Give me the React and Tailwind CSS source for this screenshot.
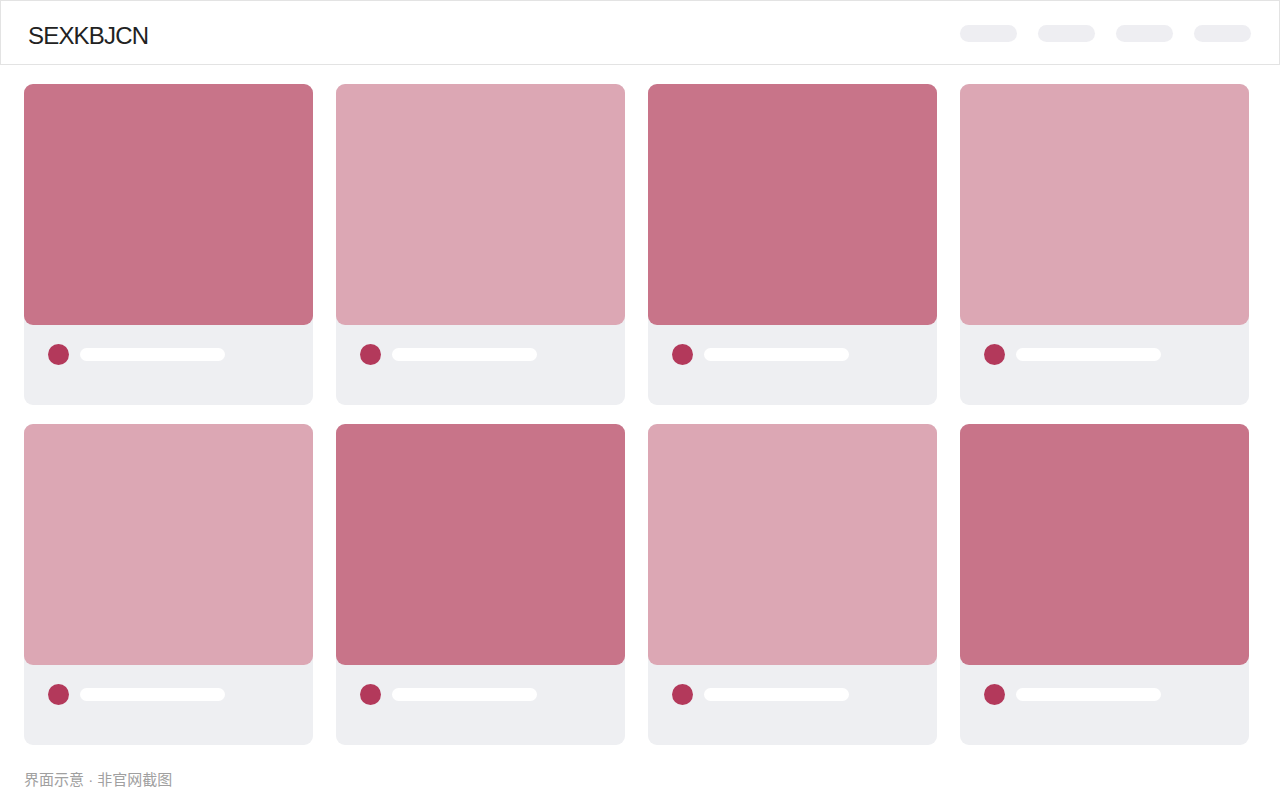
const cards = ['#c87489', '#dca7b4', '#c87489', '#dca7b4', '#dca7b4', '#c87489', '#dca7b4', '#c87489']

function Card({ color }) {
  return (
    <div className="w-[289px] h-[321px] rounded-[9px] bg-[#eeeff2] flex flex-col">
      <div className="h-[241px] rounded-[9px]" style={{ backgroundColor: color }} />
      <div className="flex items-center gap-[11px] pl-6 pt-[19px]">
        <span className="w-[21px] h-[21px] rounded-full bg-[#b3395b]" />
        <span className="w-[145px] h-[13px] rounded-full bg-white" />
      </div>
    </div>
  )
}

export default function App() {
  return (
    <div className="w-[1280px] h-[800px] bg-white font-['Liberation_Sans','Noto_Sans_CJK_SC',sans-serif]">
      <header className="h-[65px] border border-[#e3e3e3] flex items-center justify-between pl-[27px] pr-[28px]">
        <h1 className="text-[24px] text-[#222222] tracking-[-0.8px] pt-[6px]">SEXKBJCN</h1>
        <nav className="flex gap-[21px] pt-[1px]">
          <span className="w-[57px] h-[17px] rounded-full bg-[#eeeef2]" />
          <span className="w-[57px] h-[17px] rounded-full bg-[#eeeef2]" />
          <span className="w-[57px] h-[17px] rounded-full bg-[#eeeef2]" />
          <span className="w-[57px] h-[17px] rounded-full bg-[#eeeef2]" />
        </nav>
      </header>
      <main className="pl-6 pt-[19px] grid grid-cols-[repeat(4,289px)] gap-x-[23px] gap-y-[19px]">
        {cards.map((c, i) => (
          <Card key={i} color={c} />
        ))}
      </main>
      <p className="pl-6 pt-[24px] text-[15px] text-[#a0a0a0]">界面示意 · 非官网截图</p>
    </div>
  )
}
